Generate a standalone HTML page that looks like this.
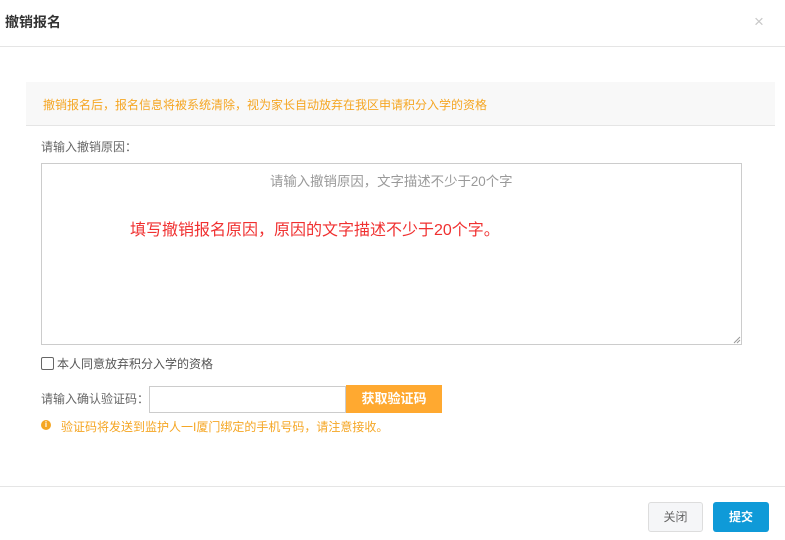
<!DOCTYPE html>
<html><head><meta charset="utf-8"><style>
*{margin:0;padding:0;box-sizing:border-box}
body{width:785px;height:540px;background:#fff;font-family:"Liberation Sans","Noto Sans CJK SC",sans-serif;position:relative;overflow:hidden;color:#555}
.a{position:absolute;white-space:nowrap}
</style></head><body>
<div class="a" style="left:5px;top:12px;font-size:14px;font-weight:bold;color:#333">撤销报名</div>
<div class="a" style="left:754px;top:12px;font-size:17px;color:#c8c8c8">×</div>
<div class="a" style="left:0;top:46px;width:785px;height:1px;background:#e5e5e5"></div>
<div class="a" style="left:26px;top:82px;width:749px;height:44px;background:#f8f8f8;border-bottom:1px solid #e5e5e5"></div>
<div class="a" style="left:43px;top:96px;font-size:12px;color:#f5a623">撤销报名后，报名信息将被系统清除，视为家长自动放弃在我区申请积分入学的资格</div>
<div class="a" style="left:41px;top:138px;font-size:12px;color:#666">请输入撤销原因：</div>
<div class="a" style="left:41px;top:163px;width:701px;height:182px;border:1px solid #ccc"></div>
<svg class="a" style="left:733px;top:336px" width="8" height="8"><path d="M1 7L7 1M4 7L7 4" stroke="#999" stroke-width="1"/></svg>
<div class="a" style="left:270px;top:170px;font-size:13.4px;color:#999">请输入撤销原因，文字描述不少于20个字</div>
<div class="a" style="left:130px;top:216px;font-size:16px;color:#f03030">填写撤销报名原因，原因的文字描述不少于20个字。</div>
<div class="a" style="left:41px;top:357px;width:13px;height:13px;border:1px solid #666;border-radius:2px"></div>
<div class="a" style="left:57px;top:355px;font-size:12px;color:#555">本人同意放弃积分入学的资格</div>
<div class="a" style="left:41px;top:390px;font-size:12px;color:#666">请输入确认验证码：</div>
<div class="a" style="left:149px;top:386px;width:197px;height:27px;border:1px solid #ccc"></div>
<div class="a" style="left:346px;top:385px;width:96px;height:28px;background:#ffa930;color:#fff;font-size:13px;font-weight:bold;text-align:center;line-height:28px">获取验证码</div>
<div class="a" style="left:41px;top:420px;width:10px;height:10px;border-radius:50%;background:#f5a623;color:#fff;font-size:8px;text-align:center;line-height:10px;font-weight:bold">i</div>
<div class="a" style="left:61px;top:418px;font-size:12px;color:#f5a623">验证码将发送到监护人一I厦门绑定的手机号码，请注意接收。</div>
<div class="a" style="left:0;top:486px;width:785px;height:1px;background:#e5e5e5"></div>
<div class="a" style="left:648px;top:502px;width:55px;height:30px;border:1px solid #ddd;border-radius:3px;background:#f5f6f8;font-size:12px;color:#666;text-align:center;line-height:28px">关闭</div>
<div class="a" style="left:713px;top:502px;width:56px;height:30px;border-radius:3px;background:#0f9ad8;font-size:12px;font-weight:bold;color:#fff;text-align:center;line-height:30px">提交</div>
</body></html>
